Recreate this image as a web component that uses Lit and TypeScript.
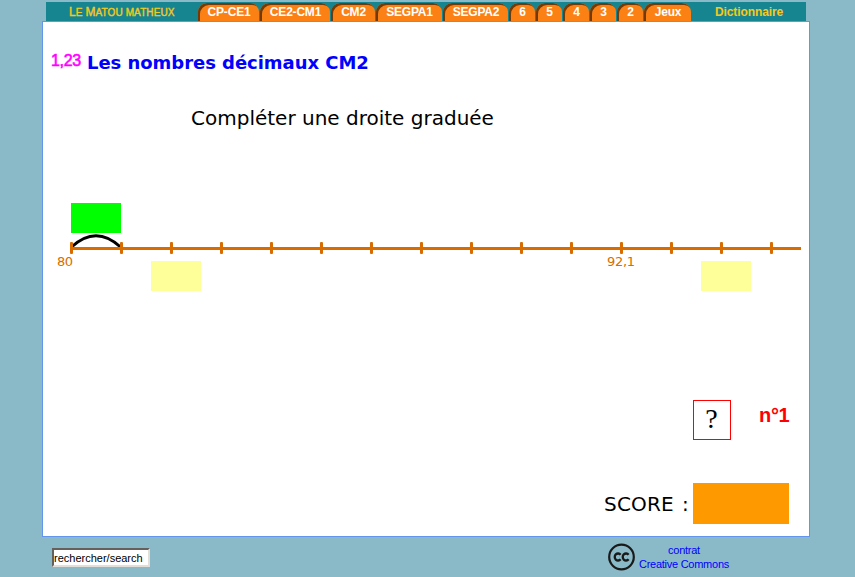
import { LitElement, html, svg, css } from "lit";
import { customElement } from "lit/decorators.js";

const TABS = [
  { label: "CP-CE1", width: 61 },
  { label: "CE2-CM1", width: 70 },
  { label: "CM2", width: 44 },
  { label: "SEGPA1", width: 66 },
  { label: "SEGPA2", width: 65 },
  { label: "6", width: 26 },
  { label: "5", width: 26 },
  { label: "4", width: 26 },
  { label: "3", width: 26 },
  { label: "2", width: 26 },
  { label: "Jeux", width: 47 },
];

@customElement("nav-tabs")
class NavTabs extends LitElement {
  static styles = css`
    :host {
      display: flex;
      box-sizing: border-box;
      width: 760px;
      height: 19px;
      margin-left: 46px;
      background: #17858f;
      font: bold 12px/18px "Liberation Sans", Arial, sans-serif;
      color: #f5c91c;
      white-space: nowrap;
    }
    .home {
      width: 152px;
      box-sizing: border-box;
      padding: 1px 0 0 23px;
      font-size: 10px;
      font-weight: normal;
      letter-spacing: 0.1px;
      text-transform: uppercase;
      -webkit-text-stroke: 0.4px #f5c91c;
    }
    .initial {
      font-size: 12px;
    }
    .tabs {
      display: flex;
      gap: 1px;
      padding-top: 1px;
    }
    .tab {
      box-sizing: border-box;
      height: 18px;
      padding-left: 1px;
      border-radius: 9px 9px 0 0;
      background: #fc8114;
      box-shadow: inset 2px 2px 0 #713a08;
      color: #fff;
      text-align: center;
      line-height: 18px;
      letter-spacing: -0.2px;
    }
    .dict {
      padding: 1px 0 0 24px;
      letter-spacing: -0.1px;
    }
  `;
  render() {
    return html`
      <div class="home"><span class="initial">L</span>e <span class="initial">M</span>atou matheux</div>
      <div class="tabs">
        ${TABS.map((t) => html`<div class="tab" style="width:${t.width}px">${t.label}</div>`)}
      </div>
      <div class="dict">Dictionnaire</div>
    `;
  }
}

@customElement("number-line")
class NumberLine extends LitElement {
  static styles = css`
    :host,
    svg {
      display: block;
    }
    .label {
      font: 13px Verdana, "DejaVu Sans", sans-serif;
      fill: #d96c00;
    }
  `;
  render() {
    const ticks = Array.from({ length: 15 }, (_, i) => 27 + i * 50);
    return html`
      <svg width="766" height="95" viewBox="0 0 766 95">
        <rect x="28" y="3" width="50" height="30" fill="#00ff00" />
        <rect x="108" y="61" width="50" height="30" fill="#ffff99" />
        <rect x="658" y="61" width="50" height="30" fill="#ffff99" />
        <path d="M28.500 47Q53 24.500 77.500 47" fill="none" stroke="#000" stroke-width="3" />
        <rect x="27" y="47" width="731" height="3" fill="#d96c00" />
        ${ticks.map(
          (x) => svg`<rect x=${x} y="42" width="3" height="12" rx="1" fill="#d96c00" />`,
        )}
        <text class="label" x="14" y="66" textLength="16">80</text>
        <text class="label" x="564" y="66" textLength="28">92,1</text>
      </svg>
    `;
  }
}

@customElement("app-root")
class AppRoot extends LitElement {
  static styles = css`
    :host {
      display: block;
      box-sizing: border-box;
      width: 855px;
      height: 577px;
      padding-top: 2px;
      overflow: hidden;
      background: #8abac8;
      font-family: "Liberation Sans", Arial, sans-serif;
      white-space: nowrap;
    }
    .panel {
      box-sizing: border-box;
      width: 768px;
      height: 516px;
      margin-left: 42px;
      border: 1px solid #6495ed;
      background: #fff;
      display: flex;
      flex-direction: column;
    }
    .heading {
      display: flex;
      height: 62px;
      box-sizing: border-box;
      padding: 28px 0 0 8px;
    }
    .badge {
      width: 36px;
      font-size: 16px;
      line-height: 21px;
      letter-spacing: -0.3px;
      color: #ff00ff;
      -webkit-text-stroke: 0.6px #ff00ff;
    }
    .title {
      font: bold 18px/26px Verdana, "DejaVu Sans", sans-serif;
      letter-spacing: -0.04px;
      color: #0000ff;
    }
    .task {
      height: 116px;
      box-sizing: border-box;
      padding: 21px 0 0 148px;
      font: 20px/27px Verdana, "DejaVu Sans", sans-serif;
    }
    .question {
      display: flex;
      margin-top: 105px;
      padding-left: 650px;
    }
    .help {
      box-sizing: border-box;
      width: 38px;
      height: 40px;
      padding-right: 1px;
      border: 1px solid #ff0000;
      text-align: center;
      font: 28px/36px "Liberation Serif", serif;
    }
    .number {
      padding-left: 28px;
      font-size: 20px;
      font-weight: bold;
      line-height: 30px;
      letter-spacing: -0.3px;
      color: #ff0000;
    }
    .score {
      display: flex;
      margin-top: 43px;
      padding-left: 561px;
      font: 20px/42px Verdana, "DejaVu Sans", sans-serif;
    }
    .score-label {
      width: 89px;
      letter-spacing: 0.2px;
      word-spacing: 1.5px;
    }
    .score-box {
      width: 96px;
      height: 41px;
      background: #ff9900;
    }
    .footer {
      display: flex;
      padding-left: 52px;
    }
    .search {
      box-sizing: border-box;
      width: 98px;
      height: 19px;
      margin: 11px 458px 0 0;
      padding: 0;
      border: 2px solid;
      border-color: #65605c #e4ded8 #e4ded8 #65605c;
      border-radius: 0;
      outline: none;
      background: #fff;
      color: #000;
      font: 11px/15px "Liberation Sans", Arial, sans-serif;
    }
    .cc {
      display: block;
      margin-top: 6px;
    }
    .license {
      margin: 6px 0 0 3px;
      text-align: center;
      font-size: 11px;
      line-height: 14px;
      letter-spacing: -0.26px;
      color: #0000ff;
    }
  `;
  render() {
    return html`
      <nav-tabs></nav-tabs>
      <div class="panel">
        <div class="heading">
          <div class="badge">1,23</div>
          <div class="title">Les nombres décimaux CM2</div>
        </div>
        <div class="task">Compléter une droite graduée</div>
        <number-line></number-line>
        <div class="question">
          <div class="help">?</div>
          <div class="number">n°1</div>
        </div>
        <div class="score">
          <div class="score-label">SCORE :</div>
          <div class="score-box"></div>
        </div>
      </div>
      <div class="footer">
        <input class="search" value="rechercher/search" />
        <svg class="cc" width="28" height="28" viewBox="0 0 28 28" fill="none" stroke="#1a1a1a">
          <circle cx="13.500" cy="14" r="12.300" stroke-width="2.200" />
          <path
            d="M12.600 11.800A3.300 3.500 0 1 0 12.600 16.200M20.600 11.800A3.300 3.500 0 1 0 20.600 16.200"
            stroke-width="2.300"
          />
        </svg>
        <div class="license">contrat<br />Creative Commons</div>
      </div>
    `;
  }
}
